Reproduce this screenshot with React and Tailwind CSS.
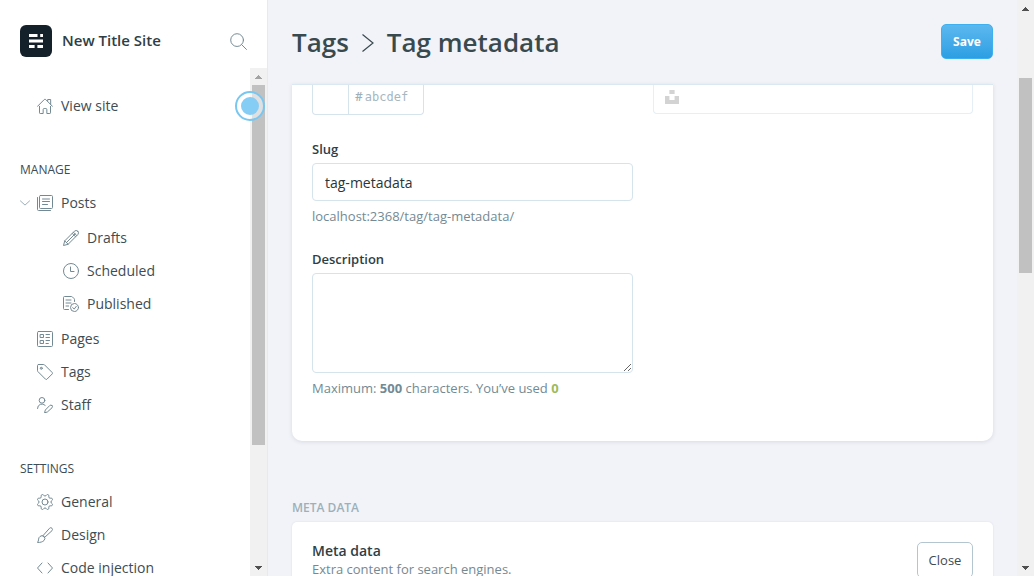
import React from 'react';

function Icon({ children, className = 'size-4 text-[#738a94]' }) {
  return (
    <svg
      viewBox="0 0 24 24"
      fill="none"
      stroke="currentColor"
      strokeWidth="1.5"
      strokeLinecap="round"
      strokeLinejoin="round"
      className={`shrink-0 ${className}`}
      aria-hidden="true"
    >
      {children}
    </svg>
  );
}

const icons = {
  house: (
    <>
      <path d="M.75 12.5 10.9 2.3a1.5 1.5 0 0 1 2.2 0L23.250 12.5" />
      <path d="M16 4.500V2.250h4.500V9.500" />
      <path d="M3.750 12.500v9.750a1 1 0 0 0 1 1h4.500v-6a1.500 1.500 0 0 1 1.500-1.500h2.500a1.500 1.500 0 0 1 1.500 1.500v6h4.500a1 1 0 0 0 1-1V12.500" />
    </>
  ),
  posts: (
    <>
      <rect x="3.750" y=".75" width="19.500" height="19.500" rx="1.500" />
      <path d="M.75 3.750v18a1.500 1.500 0 0 0 1.500 1.500h18M8.250 6h10.500M8.250 9.750h10.500M8.250 14.250h7.500" />
    </>
  ),
  pencil: (
    <>
      <path d="M22.200 1.800a3.600 3.600 0 0 0-5.100 0L2.600 16.300.75 23.250l6.950-1.850L22.200 6.900a3.600 3.600 0 0 0 0-5.100z" />
      <path d="m15.600 3.300 5.100 5.100M2.600 16.300l5.100 5.100M5.200 18.800 18.200 5.800M13.800 5.100l5.100 5.100" />
    </>
  ),
  clock: (
    <>
      <circle cx="12" cy="12" r="11.250" />
      <path d="M11.250 6v6.750h5.250" />
    </>
  ),
  published: (
    <>
      <path d="M8.250 20.250h-6a1.500 1.500 0 0 1-1.500-1.500V2.250A1.500 1.500 0 0 1 2.250.75h10.600a1.500 1.500 0 0 1 1.060.44l2.900 2.900a1.500 1.500 0 0 1 .44 1.060V8.250M4.500 6h7.500M4.500 10.500h7.500M4.500 15h4" />
      <circle cx="17.250" cy="17.250" r="6" />
      <path d="m19.900 15.500-3 4-2.300-1.900" />
    </>
  ),
  pages: (
    <>
      <rect x=".75" y=".75" width="22.500" height="22.500" rx="1.500" />
      <path d="M5.250 5.250h4.500v4.500h-4.500zM5.250 14.250h4.500v4.500h-4.500zM13.500 5.250h5.250M13.500 9.750h5.250M13.500 14.250h5.250M13.500 18.750h3.500" />
    </>
  ),
  tag: (
    <>
      <path d="M2.250.75h7.900a1.500 1.500 0 0 1 1.060.44L22.810 12.800a1.500 1.500 0 0 1 0 2.120l-7.890 7.890a1.500 1.500 0 0 1-2.120 0L1.190 11.200a1.500 1.500 0 0 1-.44-1.060V2.250A1.500 1.500 0 0 1 2.250.75z" />
      <circle cx="6.400" cy="6.400" r="1.500" />
    </>
  ),
  staff: (
    <>
      <circle cx="7.500" cy="5" r="4.250" />
      <path d="M.75 17.250a6.750 6.750 0 0 1 11.500-4.800M22.500 12.800a2.400 2.400 0 0 0-3.400 0l-6.600 6.700-1.200 4.200 4.200-1.200 7-6.300a2.400 2.400 0 0 0 0-3.400z" />
    </>
  ),
  gear: (
    <>
      <circle cx="12" cy="12" r="4.500" />
      <path d="M10.546 2.438a1.957 1.957 0 0 0 2.908 0L14.400 1.400a1.959 1.959 0 0 1 3.410 1.413l-.071 1.400a1.958 1.958 0 0 0 2.051 2.054l1.400-.071a1.959 1.959 0 0 1 1.410 3.410l-1.042.94a1.960 1.960 0 0 0 0 2.909l1.042.94a1.959 1.959 0 0 1-1.413 3.410l-1.400-.071a1.958 1.958 0 0 0-2.056 2.056l.071 1.400A1.959 1.959 0 0 1 14.400 22.600l-.941-1.041a1.959 1.959 0 0 0-2.908 0L9.606 22.600A1.959 1.959 0 0 1 6.200 21.192l.072-1.400a1.958 1.958 0 0 0-2.056-2.056l-1.400.071A1.958 1.958 0 0 1 1.400 14.400l1.041-.94a1.960 1.960 0 0 0 0-2.909L1.400 9.606A1.958 1.958 0 0 1 2.809 6.200l1.400.071a1.958 1.958 0 0 0 2.058-2.060L6.200 2.810A1.959 1.959 0 0 1 9.606 1.400z" />
    </>
  ),
  brush: (
    <>
      <path d="M8.600 13.400 18.800 1.900a2.600 2.600 0 0 1 3.700 0 2.600 2.600 0 0 1 0 3.600L11.100 15.900" />
      <path d="M10.500 14.300a4.200 4.200 0 0 1 0 6c-2.200 2.200-5.700 3-9.750 2.900 1.300-1.500 1.200-2.700 1.700-5a5 5 0 0 1 2-3.900 4.200 4.200 0 0 1 6.050 0z" />
    </>
  ),
  code: <path d="M7.500 4.500.75 12l6.750 7.500M16.500 4.500 23.250 12l-6.750 7.500" />,
};

function NavItem({ icon, label, sub = false, expandable = false }) {
  return (
    <li>
      <a href="#" className={`flex h-[33px] items-center gap-2 pb-px ${sub ? 'pl-[63px]' : expandable ? 'pl-5' : 'pl-[37px]'}`}>
        <span className="flex items-center gap-[7px]">
          {expandable && (
            <Icon className="size-[10px] text-[#9db0b9]">
              <path strokeWidth="2.400" d="M1 7l11 10L23 7" />
            </Icon>
          )}
          <Icon>{icons[icon]}</Icon>
        </span>
        <span className="pb-px leading-5">{label}</span>
      </a>
    </li>
  );
}

function NavHeading({ children }) {
  return <h2 className="px-5 pt-[37px] pb-[7px] text-[12px] leading-5">{children}</h2>;
}

function Arrow({ down = false, className }) {
  return (
    <span className="flex h-[17px] shrink-0 items-center justify-center">
      <svg viewBox="0 0 7 4" className={`h-1 w-[7px] ${className}`} shapeRendering="crispEdges" fill="currentColor" aria-hidden="true">
        <path d={down ? 'M0 0h7v1H6v1H5v1H4v1H3V3H2V2H1V1H0z' : 'M3 0h1v1h1v1h1v1h1v1H0V3h1V2h1V1h1z'} />
      </svg>
    </span>
  );
}

function ScrollBar({ upColor, spacer, thumb }) {
  return (
    <div className="flex w-[17px] shrink-0 flex-col bg-[#f1f1f1]" aria-hidden="true">
      <Arrow className={upColor} />
      <div className="flex-1 px-[2px]">
        <div className={spacer} />
        <div className={`bg-[#c1c1c1] ${thumb}`} />
      </div>
      <Arrow down className="text-[#505050]" />
    </div>
  );
}

function Sidebar() {
  return (
    <aside className="flex w-[268px] shrink-0 flex-col border-r border-[#e5e9f0] bg-white">
      <header className="flex h-[68px] shrink-0 items-center gap-[10px] px-5 pt-[14px]">
        <span className="flex size-8 items-center justify-center rounded-md bg-[#15212a]">
          <svg viewBox="0 0 14 14" className="size-[14px]" fill="#fff" aria-hidden="true">
            <path d="M0 0h8.500v2.900H0zM11.200 0H14v2.900h-2.800zM0 5.500h14v2.900H0zM0 11.100h5.600V14H0zM8.400 11.100H14V14H8.400z" />
          </svg>
        </span>
        <span className="flex-1 pb-[2px] text-[15px] font-semibold text-[#2f3e44]">New Title Site</span>
        <button type="button" aria-label="Search">
          <Icon className="size-[17px] text-[#738a94]">
            <circle cx="10" cy="10" r="9" strokeWidth="1.400" />
            <path d="m16.500 16.500 6.700 6.700" strokeWidth="1.400" />
          </Icon>
        </button>
      </header>
      <div className="relative flex min-h-0 flex-1">
        <nav className="flex-1 overflow-hidden pt-[22px] text-[14px] text-[#3e4c53]">
          <ul>
            <NavItem icon="house" label="View site" />
          </ul>
          <NavHeading>MANAGE</NavHeading>
          <ul>
            <NavItem icon="posts" label="Posts" expandable />
            <li>
              <ul className="py-[2px]">
                <NavItem icon="pencil" label="Drafts" sub />
                <NavItem icon="clock" label="Scheduled" sub />
                <NavItem icon="published" label="Published" sub />
              </ul>
            </li>
            <NavItem icon="pages" label="Pages" />
            <NavItem icon="tag" label="Tags" />
            <NavItem icon="staff" label="Staff" />
          </ul>
          <NavHeading>SETTINGS</NavHeading>
          <ul>
            <NavItem icon="gear" label="General" />
            <NavItem icon="brush" label="Design" />
            <NavItem icon="code" label="Code injection" />
          </ul>
        </nav>
        <ScrollBar upColor="text-[#a3a3a3]" spacer="h-0" thumb="h-[76%]" />
        <span className="absolute top-[23px] right-[2px] flex size-[30px] items-center justify-center rounded-full border-2 border-[#78c7f0] bg-white/50">
          <span className="size-[18px] rounded-full bg-[#86cdf5]" />
        </span>
      </div>
    </aside>
  );
}

const field = 'block w-full rounded-[4px] border border-[#d5e3ec] bg-white px-3 text-[14px] text-[#2b3438] outline-none';
const fieldLabel = 'mb-1 block text-[13px] leading-5 font-semibold text-[#2f3e44]';
const help = 'mt-[5px] text-[13px] leading-5 text-[#738a94]';

function TagForm() {
  return (
    <section className="rounded-b-[10px] border-t border-[#dae8f1] bg-white px-5 pb-[43px] shadow-[0_1px_4px_rgba(40,50,90,0.12)]">
      <div className="grid grid-cols-2 gap-5">
        <div>
          <div className="flex h-[30px] w-28 rounded-b-[4px] border border-t-0 border-[#d5e3ec] text-[12px] text-[#9db0b9]">
            <span className="w-9 shrink-0 border-r border-[#d5e3ec]" />
            <label htmlFor="accent" className="flex items-center pb-[5px] pl-[6px] font-semibold">#</label>
            <input
              id="accent"
              placeholder="abcdef"
              className="w-full min-w-0 pb-[5px] pl-[2px] font-['DejaVu_Sans_Mono',monospace] text-[12px] outline-none placeholder:text-[#a6b7bf]"
            />
          </div>

          <label htmlFor="slug" className={`mt-6 ${fieldLabel}`}>Slug</label>
          <input id="slug" defaultValue="tag-metadata" className={`${field} h-[38px]`} />
          <p className={help}>localhost:2368/tag/tag-metadata/</p>

          <label htmlFor="description" className={`mt-[23px] ${fieldLabel}`}>Description</label>
          <textarea id="description" className={`${field} h-[100px] resize py-2`} />
          <p className={help}>
            Maximum: <b>500</b> characters. You’ve used <b className="text-[#9fbb58]">0</b>
          </p>
        </div>
        <div className="flex h-[29px] items-start rounded-b-[4px] border border-t-0 border-[#e6eff5] pt-[5px] pl-[11px]">
          <svg viewBox="0 0 14 14" className="size-[14px]" fill="#d3d3d3" aria-label="Unsplash">
            <path d="M4.400 0h5.200v4H4.400zM0 6h4.400v4h5.200V6H14v8H0z" />
          </svg>
        </div>
      </div>
    </section>
  );
}

export default function App() {
  return (
    <div className="flex h-screen overflow-hidden bg-[#f2f3f8] font-['Open_Sans','Noto_Sans',sans-serif] text-[#3e4c53]">
      <Sidebar />
      <main className="flex min-w-0 flex-1 flex-col overflow-hidden px-6">
        <header className="flex h-[84px] shrink-0 items-center justify-between pb-px">
          <h1 className="flex items-center gap-3 pt-[2px] text-[26px] font-semibold text-[#394a4f]">
            <a href="#">Tags</a>
            <svg viewBox="0 0 14 20" className="h-5 w-[14px]" fill="none" stroke="currentColor" strokeWidth="1.200" aria-hidden="true">
              <path d="M1.500 1.500 12 10 1.500 18.500" />
            </svg>
            <span>Tag metadata</span>
          </h1>
          <button
            type="button"
            className="h-[35px] w-[52px] rounded-[5px] border border-[#3eb0ef] bg-linear-to-b from-[#5bb8ef] to-[#2b9fe3] pt-px text-[12px] font-bold text-white"
          >
            Save
          </button>
        </header>
        <TagForm />
        <h2 className="mt-14 mb-1 pt-px text-[12px] leading-5 font-semibold text-[#9db0b9]">META DATA</h2>
        <section className="flex items-start justify-between rounded-t-[5px] bg-white px-5 pt-5 pb-10 shadow-[0_0_2px_rgba(40,50,90,0.12)]">
          <div>
            <h3 className="text-[14px] leading-[18px] font-semibold text-[#2f3e44]">Meta data</h3>
            <p className="text-[13px] leading-[18px] text-[#738a94]">Extra content for search engines.</p>
          </div>
          <button type="button" className="h-9 w-14 shrink-0 rounded-[5px] border border-[#b3c6cf] pt-[2px] text-[13px]">
            Close
          </button>
        </section>
      </main>
      <ScrollBar upColor="text-[#505050]" spacer="h-[61px]" thumb="h-[36%]" />
    </div>
  );
}
